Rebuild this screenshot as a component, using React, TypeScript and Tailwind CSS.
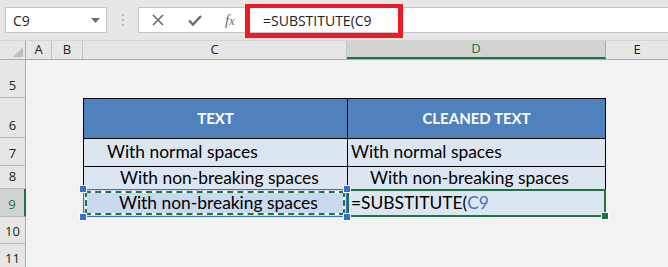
import React from 'react';

const ui = { fontFamily: '"Open Sans", "Noto Sans", sans-serif' };
const cell = { fontFamily: 'Lato, "Noto Sans", sans-serif' };

function RowHead({ n, h, active = false }: { n: string; h: string; active?: boolean }) {
  return (
    <div
      className={`w-[26px] ${h} shrink-0 flex items-end justify-center pb-[2px] text-[13px] border-b border-[#b8b8b8] ${
        active ? 'bg-[#d2d2d2] text-[#217346] border-r-2 border-r-[#217346]' : 'bg-[#e6e6e6] text-[#222] border-r border-r-[#ababab]'
      }`}
      style={ui}
    >
      {n}
    </div>
  );
}

function Gap() {
  return (
    <>
      <div className="w-[26px] shrink-0" />
      <div className="w-[31px] shrink-0" />
    </>
  );
}

export default function App() {
  return (
    <div className="w-[668px] h-[267px] overflow-hidden bg-[#f2f2f2] relative select-none">
      {/* formula bar */}
      <div className="h-[41px] bg-[#e6e6e6] flex items-start pt-[7px] pl-[5px] border-b border-[#d4d4d4]">
        <div className="w-[102px] h-[26px] bg-white border border-[#c6c6c6] flex items-center justify-between pl-[7px] pr-[6px] text-[14px] text-[#222]" style={ui}>
          <span>C9</span>
          <svg width="9" height="5" viewBox="0 0 9 5"><path d="M0 0h9L4.5 5z" fill="#6f6f6f" /></svg>
        </div>
        <div className="w-[31px] h-[26px] flex flex-col items-center justify-center gap-[3px]">
          <span className="w-[2px] h-[2px] bg-[#b4b4b4]" />
          <span className="w-[2px] h-[2px] bg-[#b4b4b4]" />
          <span className="w-[2px] h-[2px] bg-[#b4b4b4]" />
        </div>
        <div className="flex-1 h-[26px] bg-white border border-[#c6c6c6] border-r-0 flex items-center">
          <div className="w-[108px] flex items-center shrink-0">
            <svg className="ml-[13px]" width="12" height="12" viewBox="0 0 12 12">
              <path d="M1 1l10 10M11 1L1 11" stroke="#6a6a6a" strokeWidth="1.6" />
            </svg>
            <svg className="ml-[24px]" width="14" height="11" viewBox="0 0 14 11">
              <path d="M1 5.5l4 4L13 1" stroke="#6a6a6a" strokeWidth="2.4" fill="none" />
            </svg>
            <span className="ml-[23px] text-[15px] italic text-[#6a6a6a] leading-none" style={{ fontFamily: '"Liberation Serif", serif' }}>
              f<span className="text-[12px]">x</span>
            </span>
          </div>
          <span className="pl-[16px] text-[14px] text-[#222]" style={ui}>=SUBSTITUTE(C9</span>
        </div>
      </div>

      {/* column headers */}
      <div className="h-[19px] flex bg-[#e6e6e6] border-b border-[#ababab] text-[13px] text-[#222]" style={ui}>
        <div className="w-[26px] shrink-0 border-r border-[#ababab] flex items-end justify-end pr-[2px] pb-[2px]">
          <svg width="10" height="10" viewBox="0 0 10 10"><path d="M10 0v10H0z" fill="#c0c0c0" /></svg>
        </div>
        <div className="w-[26px] shrink-0 border-r border-[#c4c4c4] flex items-center justify-center">A</div>
        <div className="w-[31px] shrink-0 border-r border-[#c4c4c4] flex items-center justify-center">B</div>
        <div className="w-[264px] shrink-0 border-r border-[#c4c4c4] flex items-center justify-center">C</div>
        <div className="w-[259px] shrink-0 bg-[#d2d2d2] border-r border-[#ababab] border-b-2 border-b-[#217346] text-[#217346] flex items-center justify-center">D</div>
        <div className="flex-1 flex items-center justify-center">E</div>
      </div>

      {/* row 5 */}
      <div className="flex">
        <RowHead n="5" h="h-[38px]" />
      </div>

      {/* row 6 header */}
      <div className="flex">
        <RowHead n="6" h="h-[40px]" />
        <Gap />
        <div className="w-[264px] h-[40px] shrink-0 bg-[#4f81bd] border-l border-t border-black flex items-center justify-center text-white font-bold text-[15px]" style={cell}>
          TEXT
        </div>
        <div className="w-[259px] h-[40px] shrink-0 bg-[#4f81bd] border-x border-t border-black flex items-center justify-center text-white font-bold text-[15px]" style={cell}>
          CLEANED TEXT
        </div>
      </div>

      {/* row 7 */}
      <div className="flex">
        <RowHead n="7" h="h-[28px]" />
        <Gap />
        <div className="w-[264px] h-[28px] shrink-0 bg-[#dce6f1] border-l border-t border-black flex items-center pl-[23px] text-[17.4px] text-black" style={cell}>
          With normal spaces
        </div>
        <div className="w-[259px] h-[28px] shrink-0 bg-[#dce6f1] border-x border-t border-black flex items-center pl-[3px] text-[17.4px] text-black" style={cell}>
          With normal spaces
        </div>
      </div>

      {/* row 8 */}
      <div className="flex">
        <RowHead n="8" h="h-[23px]" />
        <Gap />
        <div className="w-[264px] h-[23px] shrink-0 bg-[#dce6f1] border-l border-t border-black flex items-center pl-[36px] text-[17.4px] text-black" style={cell}>
          With non-breaking spaces
        </div>
        <div className="w-[259px] h-[23px] shrink-0 bg-[#dce6f1] border-x border-t border-black flex items-center pl-[22px] text-[17.4px] text-black" style={cell}>
          With non-breaking spaces
        </div>
      </div>

      {/* row 9 */}
      <div className="flex">
        <RowHead n="9" h="h-[28px]" active />
        <Gap />
        <div className="relative w-[264px] h-[28px] shrink-0 bg-[#c9d9ee] border border-[#3a6fc8] flex items-center pl-[35px] text-[17.4px] text-black" style={cell}>
          <div className="absolute inset-[1px] border-2 border-white" />
          <div className="absolute inset-[1px] border-2 border-dashed border-[#217346]" />
          <span className="relative">With non-breaking spaces</span>
          <span className="absolute -left-[4px] -top-[4px] w-[6px] h-[6px] bg-[#3a6fc8] outline outline-1 outline-white" />
          <span className="absolute -left-[4px] -bottom-[4px] w-[6px] h-[6px] bg-[#3a6fc8] outline outline-1 outline-white" />
          <span className="absolute -right-[4px] -top-[4px] w-[6px] h-[6px] bg-[#3a6fc8] outline outline-1 outline-white z-10" />
          <span className="absolute -right-[4px] -bottom-[4px] w-[6px] h-[6px] bg-[#3a6fc8] outline outline-1 outline-white z-10" />
        </div>
        <div className="relative w-[259px] h-[28px] shrink-0 bg-[#dce6f1] border-2 border-[#217346] flex items-center pl-[2px] text-[17.4px] text-black" style={cell}>
          =SUBSTITUTE(<span className="text-[#4472c4]">C9</span>
          <span className="absolute -right-[4px] -bottom-[4px] w-[6px] h-[6px] bg-[#217346] outline outline-1 outline-white" />
        </div>
      </div>

      {/* rows 10, 11 */}
      <div className="flex">
        <RowHead n="10" h="h-[27px]" />
      </div>
      <div className="flex">
        <RowHead n="11" h="h-[27px]" />
      </div>

      {/* annotation box around the formula */}
      <div className="absolute left-[245px] top-[4px] w-[158px] h-[34px] border-x-[5px] border-b-[5px] border-t-4 border-[#ed1c24]" />
    </div>
  );
}
